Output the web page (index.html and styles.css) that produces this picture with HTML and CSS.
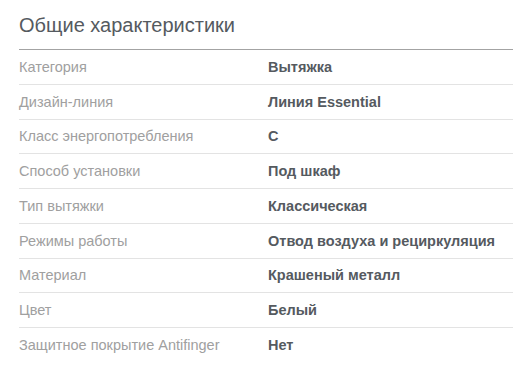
FILE: index.html
```html
<!DOCTYPE html>
<html lang="ru">
<head>
<meta charset="utf-8">
<link rel="stylesheet" href="styles.css">
</head>
<body>
<section class="specs">
  <h2 class="specs-title">Общие характеристики</h2>
  <dl class="specs-list">
    <div class="row"><dt>Категория</dt><dd>Вытяжка</dd></div>
    <div class="row"><dt>Дизайн-линия</dt><dd>Линия Essential</dd></div>
    <div class="row"><dt>Класс энергопотребления</dt><dd>C</dd></div>
    <div class="row"><dt>Способ установки</dt><dd>Под шкаф</dd></div>
    <div class="row"><dt>Тип вытяжки</dt><dd>Классическая</dd></div>
    <div class="row"><dt>Режимы работы</dt><dd>Отвод воздуха и рециркуляция</dd></div>
    <div class="row"><dt>Материал</dt><dd>Крашеный металл</dd></div>
    <div class="row"><dt>Цвет</dt><dd>Белый</dd></div>
    <div class="row last"><dt>Защитное покрытие Antifinger</dt><dd>Нет</dd></div>
  </dl>
</section>
</body>
</html>
```
FILE: styles.css
```css
html, body {
  margin: 0;
  padding: 0;
  background: #fff;
}
body {
  font-family: "Liberation Sans", Arial, sans-serif;
}
.specs {
  padding: 13px 0 0 19px;
}
.specs-title {
  margin: 0;
  font-size: 20px;
  font-weight: normal;
  color: #555a60;
  line-height: 24px;
  padding-bottom: 12px;
  border-bottom: 1px solid #a3a3a3;
}
.specs-list {
  margin: 0;
}
.row {
  display: grid;
  grid-template-columns: 249px 1fr;
  height: 33.75px;
  align-items: center;
  border-bottom: 1px solid #e3e3e3;
  font-size: 14.5px;
}
.row.last {
  border-bottom: none;
}
.row dt {
  color: #a0a0a0;
}
.row dd {
  margin: 0;
  font-weight: bold;
  color: #555a5f;
}
```
